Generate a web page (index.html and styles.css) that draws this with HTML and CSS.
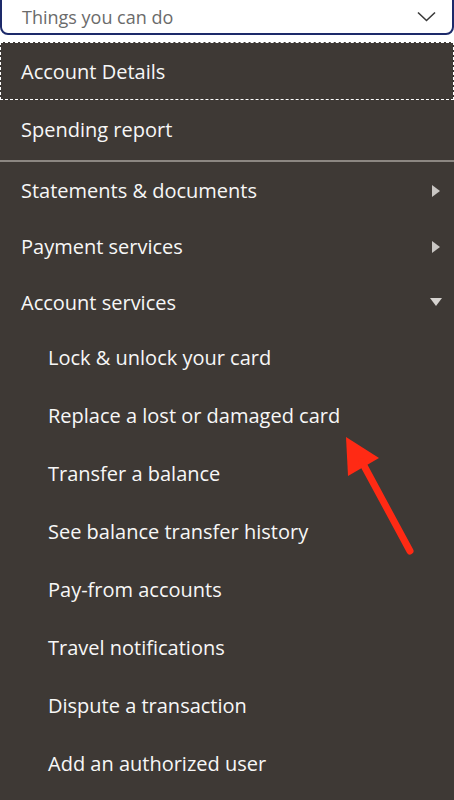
FILE: index.html
```html
<!DOCTYPE html>
<html lang="en">
<head>
    <meta charset="UTF-8">
    <meta name="viewport" content="width=device-width, initial-scale=1.0">
    <title>Things you can do</title>
    <link rel="stylesheet" href="styles.css">
</head>
<body>
    <div class="select">
        <span class="select-text">Things you can do</span>
        <svg class="chevron" width="20" height="12" viewBox="0 0 20 12">
            <polyline points="1,1.5 9.5,9.5 18,1.5" fill="none" stroke="#3a3a3a" stroke-width="1.6"/>
        </svg>
    </div>

    <div class="menu">
        <div class="item focused">Account Details</div>
        <div class="item">Spending report</div>
        <div class="divider"></div>
        <div class="item group">Statements &amp; documents <span class="tri-right"></span></div>
        <div class="item group">Payment services <span class="tri-right"></span></div>
        <div class="item group last">Account services <span class="tri-down"></span></div>
        <div class="sub">Lock &amp; unlock your card</div>
        <div class="sub">Replace a lost or damaged card</div>
        <div class="sub">Transfer a balance</div>
        <div class="sub">See balance transfer history</div>
        <div class="sub">Pay-from accounts</div>
        <div class="sub">Travel notifications</div>
        <div class="sub">Dispute a transaction</div>
        <div class="sub">Add an authorized user</div>

        <svg class="arrow" width="100" height="140" viewBox="330 430 100 140">
            <polygon points="346,437 379,458 348,476" fill="#ff2a14"/>
            <line x1="362" y1="462" x2="410" y2="551" stroke="#ff2a14" stroke-width="7" stroke-linecap="round"/>
        </svg>
    </div>
</body>
</html>
```

FILE: styles.css
```css
body {
    margin: 0;
    background-color: #ffffff;
    font-family: "Open Sans", "Liberation Sans", sans-serif;
    overflow: hidden;
}
.select {
    margin-top: -10px;
    height: 41px;
    border: 2px solid #1d2a6a;
    border-radius: 8px;
    background-color: #ffffff;
    display: flex;
    align-items: center;
    justify-content: space-between;
    padding: 0 15px 0 20px;
    box-sizing: content-box;
}
.select-text {
    font-size: 18px;
    color: #6b6b6b;
    padding-top: 8px;
}
.chevron {
    margin-top: 8px;
}
.menu {
    position: relative;
    margin-top: 7px;
    background-color: #3e3935;
    height: 758px;
    overflow: hidden;
    color: #f7f7f7;
}
.item {
    height: 58px;
    padding: 1px 14px 0 21px;
    font-size: 20px;
    display: flex;
    align-items: center;
    justify-content: space-between;
    box-sizing: border-box;
}
.focused {
    border: 1px dashed #ffffff;
    padding-left: 20px;
}
.divider {
    height: 2px;
    background-color: #8c8782;
    margin-top: 2px;
}
.group {
    height: 56px;
}
.last {
    height: 55px;
}
.sub {
    height: 58px;
    line-height: 58px;
    padding-left: 48px;
    font-size: 20px;
}
.tri-right {
    width: 0;
    height: 0;
    border-top: 6px solid transparent;
    border-bottom: 6px solid transparent;
    border-left: 8px solid #c9c6c3;
}
.tri-down {
    width: 0;
    height: 0;
    border-left: 6px solid transparent;
    border-right: 6px solid transparent;
    border-top: 8px solid #d6d3d0;
    margin-right: -2px;
}
.arrow {
    position: absolute;
    left: 330px;
    top: 388px;
}
```
